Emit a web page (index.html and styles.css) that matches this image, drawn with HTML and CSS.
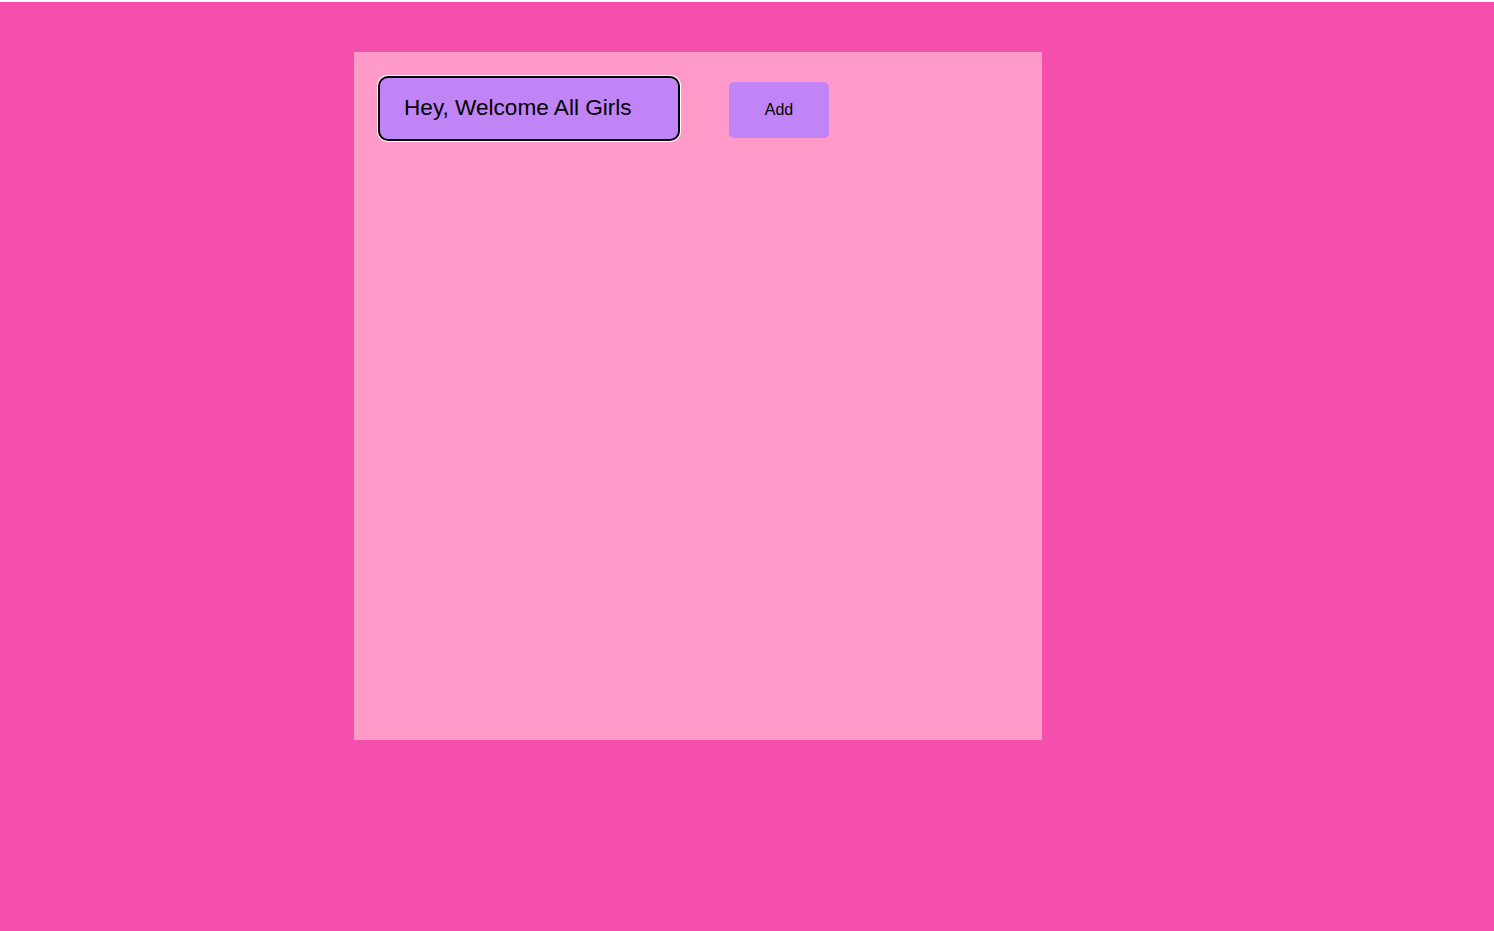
FILE: index.html
```html
<!DOCTYPE html>
<html>
<head>
<meta charset="utf-8">
<link rel="stylesheet" href="styles.css">
</head>
<body>
<div class="page">
  <div class="board">
    <div class="row">
      <div class="field">Hey, Welcome All Girls</div>
      <button class="add">Add</button>
    </div>
  </div>
</div>
</body>
</html>
```
FILE: styles.css
```css
html { background: #ffffff; }
body { margin: 0; font-family: "Liberation Sans", Arial, sans-serif; }
.page {
  margin-top: 2px;
  height: 929px;
  background: #f54fae;
  padding: 50px 0 0 354px;
  box-sizing: border-box;
}
.board {
  width: 688px;
  height: 688px;
  background: #ff9ac9;
  padding: 24px;
  box-sizing: border-box;
}
.row {
  display: flex;
  align-items: flex-start;
}
.field {
  width: 302px;
  height: 65px;
  box-sizing: border-box;
  background: #c084f7;
  border: 2px solid #000;
  border-radius: 10px;
  box-shadow: 0 0 0 1px #ffffff;
  padding: 17px 0 0 24px;
  font-size: 22.6px;
  color: #000;
}
.add {
  margin: 6px 0 0 49px;
  width: 100px;
  height: 56px;
  border: none;
  border-radius: 5px;
  background: #c084f7;
  font-family: "Liberation Sans", Arial, sans-serif;
  font-size: 16px;
  color: #000;
  padding: 0;
}
```
